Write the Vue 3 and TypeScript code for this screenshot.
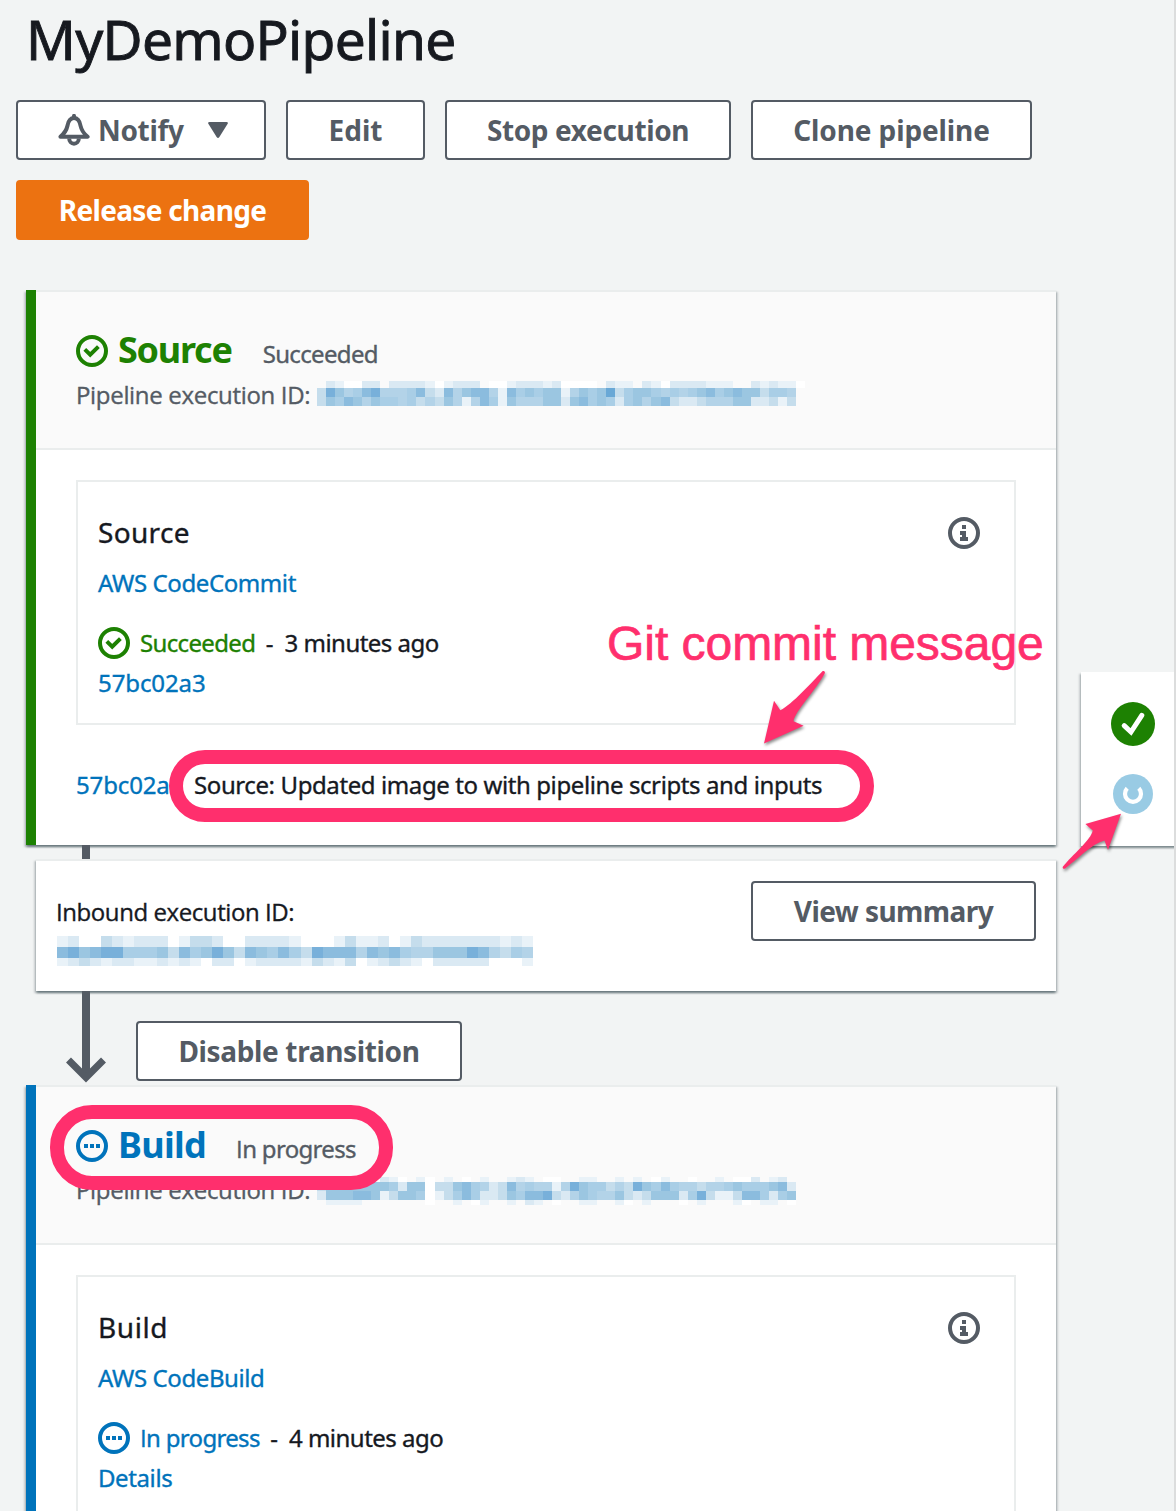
<script setup lang="ts">
type Status = 'succeeded' | 'progress'

interface Mosaic {
  cell: number
  heights: number[]
  rows: string[]
}

interface Stage {
  name: string
  status: Status
  statusText: string
  provider: string
  age: string
  link: string
  nameTracking: number
  titleTracking: number
  mosaic: Mosaic
  summary?: { commit: string; message: string }
}

/* Masked execution IDs: each digit is the strength of one cell, "w" is white. */
const stages: Stage[] = [
  {
    name: 'Source',
    status: 'succeeded',
    statusText: 'Succeeded',
    provider: 'AWS CodeCommit',
    age: '3 minutes ago',
    link: '57bc02a3',
    nameTracking: -1.26,
    titleTracking: 0.33,
    mosaic: {
      cell: 9.04,
      heights: [7, 9, 9],
      rows: [
        '021ww22022221w12220ww122212wwww0211021w22221110021211w',
        '386457844457327467741756566146569356654545675676635540',
        '365764655453436414751644466267565256467322344466223130',
      ],
    },
    summary: {
      commit: '57bc02a3',
      message: 'Source: Updated image to with pipeline scripts and inputs',
    },
  },
  {
    name: 'Build',
    status: 'progress',
    statusText: 'In progress',
    provider: 'AWS CodeBuild',
    age: '4 minutes ago',
    link: 'Details',
    nameTracking: -0.7,
    titleTracking: 0.6,
    mosaic: {
      cell: 9.04,
      heights: [5, 9, 9, 5],
      rows: [
        '000000021w01w010w01001210ww0011001010w100w0010ww20120',
        '366666665266w3367542374544148655343865754434456555672',
        '266677613665w1357522365778324654463236662583113775256',
        '011110000000w0010w10010210w0011001w01000w010001w0110w',
      ],
    },
  },
]

const inbound: Mosaic = {
  cell: 11.07,
  heights: [11, 11, 8],
  rows: [
    '1200321222013320022221000131120132222222121',
    '7867885556375686376575387774767544666874354',
    '1232122112121022012222132130123210222220001',
  ],
}

const palette: Record<string, string> = {
  '1': '#e9f2f8',
  '2': '#dae9f3',
  '3': '#c5ddec',
  '4': '#b3d3e8',
  '5': '#a9cee6',
  '6': '#9bc6e1',
  '7': '#8bbcde',
  '8': '#78b0da',
  '9': '#69a8d6',
  w: '#ffffff',
}

interface Cell {
  x: number
  y: number
  w: number
  h: number
  fill: string
}

function cells(m: Mosaic): Cell[] {
  const out: Cell[] = []
  let y = 0
  m.rows.forEach((row, r) => {
    const h = m.heights[r]
    row.split('').forEach((c, i) => {
      const x = Math.round(i * m.cell)
      if (palette[c]) {
        out.push({ x, y, w: Math.round((i + 1) * m.cell) - x, h, fill: palette[c] })
      }
    })
    y += h
  })
  return out
}
</script>

<template>
  <div class="page">
    <h1 class="title">MyDemoPipeline</h1>

    <div class="actions">
      <button class="btn notify">
        <svg class="bell" width="32" height="32" viewBox="0 0 32 32" fill="none" stroke="currentColor" stroke-width="4">
          <path d="M2.4 22.8C7 18.8 8.6 16 9.4 12C10.4 6.4 13 4.1 16 4.1C19 4.1 21.6 6.4 22.6 12C23.4 16 25 18.8 29.6 22.8Z" stroke-linejoin="round" />
          <path d="M16 1.8V4" stroke-linecap="round" />
          <path d="M11.2 24.5a4.8 5.2 0 0 0 9.6 0" />
        </svg>
        <span class="notify-text">Notify</span>
        <svg class="caret" width="20" height="16" viewBox="0 0 20 16" fill="currentColor">
          <path d="M1.5 0H18.5Q20.6 0.2 19.5 2L11.4 15Q10 16.8 8.6 15L0.5 2Q-0.6 0.2 1.5 0Z" />
        </svg>
      </button>
      <button class="btn edit">Edit</button>
      <button class="btn stop">Stop execution</button>
      <button class="btn clone">Clone pipeline</button>
      <button class="btn primary">Release change</button>
    </div>

    <div class="pipeline">
      <template v-for="stage in stages" :key="stage.name">
        <section class="stage" :class="stage.status">
          <header class="stage-head">
            <div class="stage-line">
              <svg class="status-icon" width="32" height="32" viewBox="0 0 32 32" fill="none" stroke="currentColor">
                <circle cx="16" cy="16" r="14" stroke-width="4" />
                <path v-if="stage.status === 'succeeded'" d="M8.8 14.4L14.2 19.6L22.4 11.6" stroke-width="4" />
                <path v-else d="M8 16H12M14 16H18M20 16H24" stroke-width="4" />
              </svg>
              <h2 class="stage-name" :style="{ letterSpacing: stage.nameTracking + 'px' }">{{ stage.name }}</h2>
              <span class="stage-status" :class="stage.status">{{ stage.statusText }}</span>
            </div>
            <div class="exec">
              <span class="exec-label">Pipeline execution ID:</span>
              <svg class="mask" width="490" height="28" shape-rendering="crispEdges">
                <rect v-for="(c, i) in cells(stage.mosaic)" :key="i" :x="c.x" :y="c.y" :width="c.w" :height="c.h" :fill="c.fill" />
              </svg>
            </div>
            <div v-if="stage.status === 'progress'" class="ring ring-build"></div>
          </header>

          <div class="action">
            <div class="action-head">
              <h3 class="action-name" :style="{ letterSpacing: stage.titleTracking + 'px' }">{{ stage.name }}</h3>
              <svg class="info" width="32" height="32" viewBox="0 0 32 32">
                <circle cx="16" cy="16" r="14" fill="none" stroke="currentColor" stroke-width="4" />
                <path d="M14 8h4v4h-4zM12 14h6v6h2v4h-8v-4h2v-2h-2z" fill="currentColor" />
              </svg>
            </div>
            <a class="link provider">{{ stage.provider }}</a>
            <div class="status-line">
              <svg class="status-icon" width="32" height="32" viewBox="0 0 32 32" fill="none" stroke="currentColor">
                <circle cx="16" cy="16" r="14" stroke-width="4" />
                <path v-if="stage.status === 'succeeded'" d="M8.8 14.4L14.2 19.6L22.4 11.6" stroke-width="4" />
                <path v-else d="M8 16H12M14 16H18M20 16H24" stroke-width="4" />
              </svg>
              <span class="status-text" :class="stage.status">{{ stage.statusText }}</span>
              <span class="dash">-</span>
              <span class="age">{{ stage.age }}</span>
            </div>
            <a class="link action-link">{{ stage.link }}</a>
          </div>

          <div v-if="stage.summary" class="summary">
            <a class="link commit">{{ stage.summary.commit }}</a>
            <span class="message">{{ stage.summary.message }}</span>
            <div class="ring ring-commit"></div>
          </div>
        </section>

        <div v-if="stage.summary" class="transition">
          <div class="connector"></div>
          <div class="inbound">
            <div>
              <div class="inbound-label">Inbound execution ID:</div>
              <svg class="inbound-mask" width="476" height="30" shape-rendering="crispEdges">
                <rect v-for="(c, i) in cells(inbound)" :key="i" :x="c.x" :y="c.y" :width="c.w" :height="c.h" :fill="c.fill" />
              </svg>
            </div>
            <button class="btn view">View summary</button>
          </div>
          <div class="transition-row">
            <svg class="arrow" width="40" height="92" viewBox="0 0 40 92" fill="none" stroke="#545b64">
              <path d="M20 0V86" stroke-width="8" />
              <path d="M2.5 69L20 86.5L37.5 69" stroke-width="7" />
            </svg>
            <button class="btn disable">Disable transition</button>
          </div>
        </div>
      </template>
    </div>

    <aside class="overview">
      <svg width="44" height="44" viewBox="0 0 44 44">
        <circle cx="22" cy="22" r="22" fill="#1d8102" />
        <path d="M13.2 23.6L20 30L30.8 13.4" fill="none" stroke="#fff" stroke-width="5" stroke-linecap="round" />
      </svg>
      <svg width="40" height="40" viewBox="0 0 40 40">
        <circle cx="20" cy="20" r="20" fill="#99cbe4" />
        <path d="M14.2 14.3A8 8 0 1 0 25.8 14.3" fill="none" stroke="#fff" stroke-width="4.2" />
      </svg>
    </aside>
    <div class="edge"></div>

    <div class="note">Git commit message</div>
    <svg class="pointer pointer-commit" width="70" height="84" viewBox="0 0 70 84">
      <path d="M4 77.5L14 34.8L20.3 44.2C33 37.5 50 18 62.2 5.4C63.6 4.4 65.4 5.5 64.8 7.2C56 24 35 45 33.5 55.3L43.6 59.8Z" />
    </svg>
    <svg class="pointer pointer-progress" width="70" height="66" viewBox="0 0 70 66">
      <path d="M61 3.7L25.4 14L32.8 20.4C31 30 12 45 3 56.5C2 58 3.5 59.3 5.2 58.4C18 49 32 33.5 44.5 30.5L48 40Z" />
    </svg>
  </div>
</template>

<style>
html,
body {
  margin: 0;
  overflow: hidden;
}
</style>

<style scoped>
.page {
  position: relative;
  width: 1176px;
  height: 1511px;
  overflow: hidden;
  background: #f2f4f4;
  color: #16191f;
  font-family: 'Noto Sans', 'Open Sans', sans-serif;
  font-size: 24px;
  line-height: 40px;
  -webkit-text-stroke: 0.35px currentColor;
}
h1,
h2,
h3 {
  margin: 0;
  font-weight: 400;
}
svg {
  display: block;
  flex: none;
}
.title {
  height: 91px;
  padding: 9px 0 0 26px;
  font-size: 55px;
  line-height: 60px;
  letter-spacing: -0.71px;
  -webkit-text-stroke-width: 0.9px;
}
.actions {
  display: flex;
  flex-wrap: wrap;
  gap: 20px;
  width: 1040px;
  padding-left: 16px;
}
.btn {
  box-sizing: border-box;
  display: flex;
  flex: none;
  align-items: center;
  justify-content: center;
  height: 60px;
  padding: 0;
  border: 2px solid #545b64;
  border-radius: 4px;
  background: #fff;
  color: #545b64;
  font: 700 28px/56px 'Noto Sans', 'Open Sans', sans-serif;
  white-space: nowrap;
  -webkit-text-stroke-width: 0;
}
.notify {
  justify-content: flex-start;
  width: 250px;
  padding-left: 40px;
}
.notify-text {
  box-sizing: border-box;
  width: 110px;
  padding-left: 8px;
  text-align: left;
  letter-spacing: -0.32px;
}
.caret {
  margin-left: 8px;
}
.edit {
  width: 139px;
}
.stop {
  width: 286px;
  letter-spacing: -0.37px;
}
.clone {
  width: 281px;
  letter-spacing: -0.11px;
}
.primary {
  width: 293px;
  border-color: #ec7211;
  background: #ec7211;
  color: #fff;
  letter-spacing: -0.69px;
}
.pipeline {
  width: 1030px;
  margin: 50px 0 0 26px;
}
.stage {
  box-sizing: border-box;
  height: 555px;
  border-left: 10px solid #1d8102;
  background: #fff;
  box-shadow: 0 2px 2px rgba(0, 28, 36, 0.4), 2px 2px 2px rgba(0, 28, 36, 0.15), -2px 2px 2px rgba(0, 28, 36, 0.15);
}
.stage.progress {
  border-left-color: #0073bb;
}
.stage-head {
  position: relative;
  box-sizing: border-box;
  height: 160px;
  padding: 38px 0 0 40px;
  border-top: 2px solid #eaeded;
  border-bottom: 2px solid #eaeded;
  background: #fafafa;
}
.stage-line {
  display: flex;
  height: 40px;
}
.stage-line .status-icon {
  margin-top: 5px;
}
.succeeded .status-icon,
.succeeded .stage-name {
  color: #1d8102;
}
.progress .status-icon,
.progress .stage-name {
  color: #0073bb;
}
.stage-name {
  margin-left: 10px;
  font-size: 36px;
  font-weight: 700;
  -webkit-text-stroke-width: 0;
}
.stage-status {
  margin: 4px 0 0 31px;
  color: #545b64;
  letter-spacing: -0.65px;
}
.stage-status.progress,
.status-text.progress {
  letter-spacing: -0.68px;
}
.stage-status.progress {
  margin-left: 30px;
}
.stage-status.progress::first-letter,
.status-text.progress::first-letter {
  font-family: 'Open Sans', sans-serif;
}
.exec {
  display: flex;
  margin-top: 5px;
}
.exec-label {
  width: 241px;
  color: #545b64;
  font-family: 'Open Sans', sans-serif;
  letter-spacing: -0.32px;
  white-space: nowrap;
}
.mask {
  margin-top: 6px;
}
.progress .mask {
  margin-top: 7px;
}
.action {
  box-sizing: border-box;
  width: 940px;
  height: 245px;
  margin: 30px 0 0 40px;
  padding: 30px 34px 0 20px;
  border: 2px solid #eaeded;
}
.action-head {
  display: flex;
  justify-content: space-between;
  height: 40px;
}
.action-name {
  font-size: 28px;
}
.info {
  margin-top: 5px;
  color: #545b64;
}
.link {
  display: block;
  color: #0073bb;
}
.provider {
  margin-top: 11px;
  letter-spacing: -0.4px;
}
.status-line {
  display: flex;
  margin-top: 20px;
}
.status-line .status-icon {
  margin-top: 4px;
}
.status-text {
  margin-left: 10px;
}
.status-text.succeeded {
  color: #1d8102;
  letter-spacing: -0.65px;
}
.status-text.progress {
  color: #0073bb;
}
.dash {
  margin: 0 11px 0 10.5px;
}
.age {
  letter-spacing: -0.52px;
}
.action-link {
  letter-spacing: -0.1px;
}
.progress .action-link {
  letter-spacing: -0.4px;
}
.summary {
  position: relative;
  display: flex;
  margin: 40px 0 0 40px;
}
.commit {
  width: 118px;
  letter-spacing: -0.15px;
}
.message {
  letter-spacing: -0.4px;
  white-space: nowrap;
}
.ring {
  position: absolute;
  box-sizing: border-box;
  border: 14px solid #ff2f6d;
  z-index: 2;
}
.ring-commit {
  left: 93px;
  top: -15.5px;
  width: 705px;
  height: 72.5px;
  border-radius: 36px;
}
.ring-build {
  left: 14.3px;
  top: 18.3px;
  width: 342.5px;
  height: 84.7px;
  border-radius: 42px;
}
.connector {
  width: 8px;
  height: 14px;
  margin-left: 56px;
  background: #545b64;
}
.inbound {
  box-sizing: border-box;
  display: flex;
  justify-content: space-between;
  height: 132px;
  margin-left: 10px;
  padding: 20px 20px 0;
  border-top: 2px solid #eaeded;
  background: #fff;
  box-shadow: 0 2px 2px rgba(0, 28, 36, 0.4), 2px 2px 2px rgba(0, 28, 36, 0.15), -2px 2px 2px rgba(0, 28, 36, 0.15);
}
.inbound-label {
  margin-top: 11px;
  font-family: 'Open Sans', sans-serif;
  letter-spacing: -0.42px;
}
.inbound-mask {
  margin: 4px 0 0 1px;
}
.view {
  width: 285px;
  letter-spacing: -0.56px;
}
.transition-row {
  display: flex;
  height: 94px;
}
.arrow {
  margin-left: 40px;
}
.disable {
  width: 326px;
  margin: 30px 0 0 30px;
  letter-spacing: -0.35px;
}
.overview {
  position: absolute;
  top: 672px;
  left: 1081px;
  box-sizing: border-box;
  display: flex;
  flex-direction: column;
  align-items: center;
  gap: 28px;
  width: 104px;
  height: 174px;
  padding-top: 30px;
  background: #fff;
  box-shadow: 0 2px 2px rgba(0, 28, 36, 0.4), -2px 2px 2px rgba(0, 28, 36, 0.15);
}
.edge {
  position: absolute;
  top: 0;
  right: 0;
  width: 2px;
  height: 1511px;
  background: #dcdddd;
}
.note {
  position: absolute;
  top: 616px;
  left: 607px;
  color: #ff2f6d;
  font: 48px/56px 'Liberation Sans', sans-serif;
  letter-spacing: -0.04px;
  -webkit-text-stroke: 0.7px #ff2f6d;
  white-space: nowrap;
}
.pointer {
  position: absolute;
  fill: #ff2f6d;
  filter: drop-shadow(1px 2px 1.5px rgba(0, 0, 0, 0.45));
}
.pointer-commit {
  top: 666px;
  left: 760px;
}
.pointer-progress {
  top: 810px;
  left: 1060px;
}
</style>
